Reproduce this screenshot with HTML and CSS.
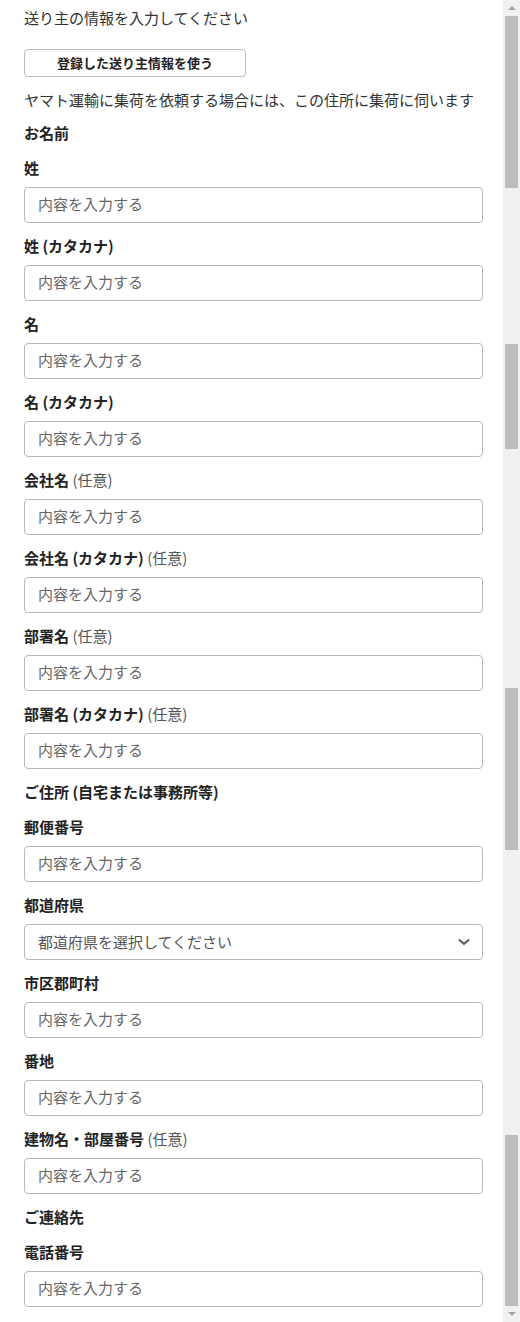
FILE: index.html
```html
<!DOCTYPE html>
<html lang="ja">
<head>
<meta charset="utf-8">
<title>送り主の情報</title>
<link rel="stylesheet" href="styles.css">
</head>
<body>
<div class="page">
  <main class="content">
    <p class="title">送り主の情報を入力してください</p>
    <button class="reg-btn" type="button">登録した送り主情報を使う</button>
    <p class="desc">ヤマト運輸に集荷を依頼する場合には、この住所に集荷に伺います</p>

    <h3 class="section">お名前</h3>
    <div class="field"><label class="label">姓</label><input class="input" placeholder="内容を入力する"></div>
    <div class="field"><label class="label">姓 (カタカナ)</label><input class="input" placeholder="内容を入力する"></div>
    <div class="field"><label class="label">名</label><input class="input" placeholder="内容を入力する"></div>
    <div class="field"><label class="label">名 (カタカナ)</label><input class="input" placeholder="内容を入力する"></div>
    <div class="field"><label class="label">会社名 <span class="opt">(任意)</span></label><input class="input" placeholder="内容を入力する"></div>
    <div class="field"><label class="label">会社名 (カタカナ) <span class="opt">(任意)</span></label><input class="input" placeholder="内容を入力する"></div>
    <div class="field"><label class="label">部署名 <span class="opt">(任意)</span></label><input class="input" placeholder="内容を入力する"></div>
    <div class="field"><label class="label">部署名 (カタカナ) <span class="opt">(任意)</span></label><input class="input" placeholder="内容を入力する"></div>

    <h3 class="section">ご住所 (自宅または事務所等)</h3>
    <div class="field"><label class="label">郵便番号</label><input class="input" placeholder="内容を入力する"></div>
    <div class="field"><label class="label">都道府県</label>
      <div class="select">
        <span class="select-text">都道府県を選択してください</span>
        <svg class="chev" width="12" height="8" viewBox="0 0 12 8"><path d="M1 1.5 L6 6 L11 1.5" fill="none" stroke="#555" stroke-width="1.8"/></svg>
      </div>
    </div>
    <div class="field"><label class="label">市区郡町村</label><input class="input" placeholder="内容を入力する"></div>
    <div class="field"><label class="label">番地</label><input class="input" placeholder="内容を入力する"></div>
    <div class="field"><label class="label">建物名・部屋番号 <span class="opt">(任意)</span></label><input class="input" placeholder="内容を入力する"></div>

    <h3 class="section">ご連絡先</h3>
    <div class="field"><label class="label">電話番号</label><input class="input" placeholder="内容を入力する"></div>
  </main>
  <div class="scrollbar">
    <span class="arrow-up"></span>
    <span class="thumb t1"></span>
    <span class="thumb t2"></span>
    <span class="thumb t3"></span>
    <span class="thumb t4"></span>
    <span class="arrow-down"></span>
  </div>
</div>
</body>
</html>
```
FILE: styles.css
```css
* { box-sizing: border-box; }
html, body {
  margin: 0;
  padding: 0;
  height: 1322px;
  overflow: hidden;
  background: #fff;
}
body {
  font-family: "Noto Sans CJK JP", "Noto Sans", sans-serif;
  color: #333;
  font-size: 15px;
}
.page {
  display: flex;
  height: 1322px;
}
.content {
  flex: 1;
  padding: 8px 20px 0 24px;
  display: flex;
  flex-direction: column;
}
.title {
  margin: 0;
  line-height: 20px;
  font-size: 15px;
}
.reg-btn {
  margin-top: 21px;
  width: 222px;
  height: 28px;
  border: 1px solid #bcbcbc;
  border-radius: 4px;
  background: #fff;
  font-family: inherit;
  font-size: 13px;
  font-weight: 700;
  color: #222;
  padding: 0;
  line-height: 26px;
}
.desc {
  margin: 13px 0 0;
  line-height: 20px;
  font-size: 15px;
}
.section {
  margin: 13px 0 2px;
  line-height: 20px;
  font-size: 15px;
  font-weight: 700;
  color: #222;
}
.field {
  display: flex;
  flex-direction: column;
  padding-top: 13px;
}
.label {
  line-height: 20px;
  font-size: 15px;
  font-weight: 700;
  color: #222;
}
.opt {
  font-weight: 400;
  color: #555;
}
.input, .select {
  margin-top: 9px;
  width: 459px;
  height: 36px;
  border: 1px solid #b8b8b8;
  border-radius: 4px;
  background: #fff;
  padding: 0 13px 4px;
  font-family: inherit;
  font-size: 15px;
  color: #333;
}
.input::placeholder {
  color: #666;
}
.select {
  display: flex;
  align-items: center;
  justify-content: space-between;
  padding: 0 12px 2px 13px;
}
.select-text {
  color: #555;
}
.chev { display: block; margin-top: 2px; }
.scrollbar {
  width: 17px;
  flex: none;
  background: #f0f0f0;
  display: flex;
  flex-direction: column;
  align-items: center;
}
.arrow-up, .arrow-down {
  width: 0;
  height: 0;
  border-left: 4px solid transparent;
  border-right: 4px solid transparent;
}
.arrow-up {
  margin-top: 6px;
  border-bottom: 4px solid #a3a3a3;
}
.arrow-down {
  margin-top: 6px;
  border-top: 4px solid #a3a3a3;
}
.thumb {
  width: 13px;
  background: #bcbcbc;
  display: block;
}
.t1 { margin-top: 6px; height: 172px; }
.t2 { margin-top: 156px; height: 105px; }
.t3 { margin-top: 239px; height: 162px; }
.t4 { margin-top: 285px; height: 171px; }
```
